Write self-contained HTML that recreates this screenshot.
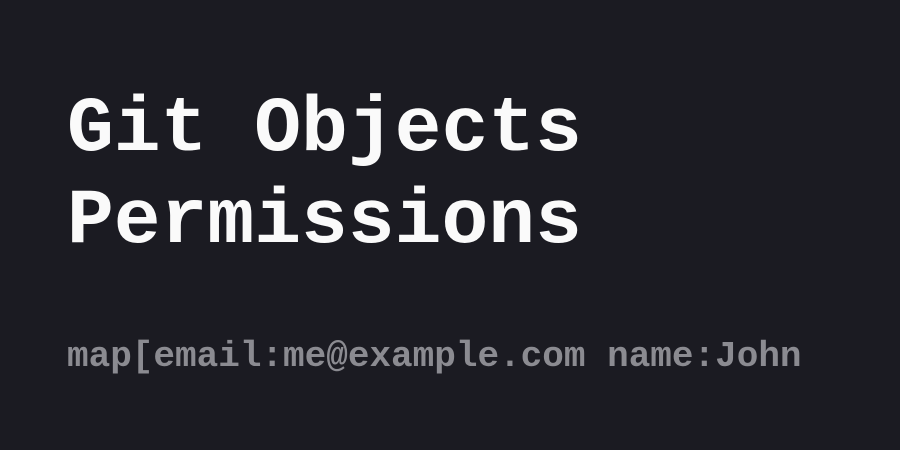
<!DOCTYPE html>
<html><head><style>
html,body{margin:0;padding:0;}
body{width:900px;height:450px;background:#1b1b22;overflow:hidden;position:relative;font-family:"Liberation Mono",monospace;font-weight:bold;}
.t{position:absolute;left:67px;color:#fafafa;font-size:78px;line-height:78px;white-space:pre;}
.s{position:absolute;left:67px;top:337px;color:#8b8b91;font-size:36px;line-height:40px;white-space:pre;}
</style></head><body>
<div class="t" style="top:91px">Git Objects</div>
<div class="t" style="top:183px">Permissions</div>
<div class="s">map[email:me@example.com name:John</div>
</body></html>
